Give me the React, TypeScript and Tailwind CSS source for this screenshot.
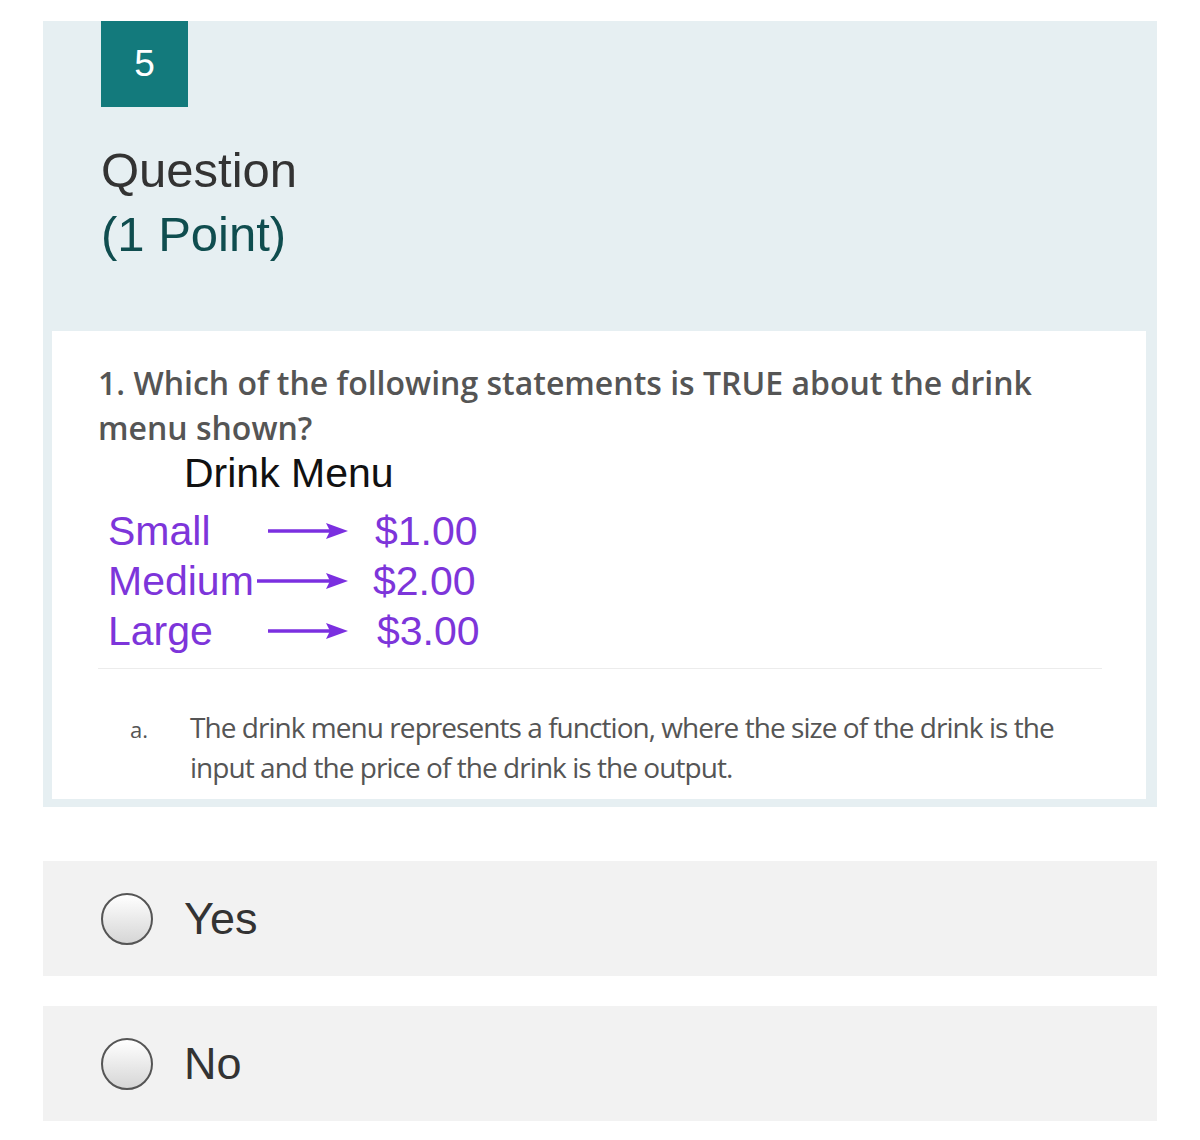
function Arrow({ long }: { long?: boolean }) {
  const w = long ? 91 : 80;
  return (
    <svg width={w} height="22" viewBox={`0 0 ${w} 22`} className="shrink-0">
      <line x1="0" y1="11" x2={w - 18} y2="11" stroke="#7b2fe0" strokeWidth="3.5" />
      <path d={`M${w - 22} 3 L${w} 11 L${w - 22} 19 L${w - 18} 11 Z`} fill="#7b2fe0" />
    </svg>
  );
}

const menu = [
  { size: 'Small', price: '$1.00', col: 'w-[160px]', pad: 'ml-[27px]', long: false },
  { size: 'Medium', price: '$2.00', col: 'w-[149px]', pad: 'ml-[25px]', long: true },
  { size: 'Large', price: '$3.00', col: 'w-[160px]', pad: 'ml-[29px]', long: false },
];

function Option({ label }: { label: string }) {
  return (
    <div className="flex h-[115px] items-center bg-[#f2f2f2] pl-[58px]">
      <span className="h-[52px] w-[52px] rounded-full border-2 border-[#555] bg-gradient-to-b from-white to-[#d6d6d6]" />
      <span className="ml-[31px] text-[45px] text-[#333]">{label}</span>
    </div>
  );
}

export default function App() {
  return (
    <div className="min-h-[1140px] bg-white px-[43px] pt-[21px] font-['Liberation_Sans',Arial,sans-serif]">
      <div className="bg-[#e6eff2] pb-[8px] pr-[11px] pl-[9px]">
        <div className="pl-[49px]">
          <div className="flex h-[86px] w-[87px] items-center justify-center bg-[#137a7c] text-[37px] text-white">
            5
          </div>
          <div className="mt-[31px] text-[49px] leading-[64px] text-[#333]">Question</div>
          <div className="text-[49px] leading-[64px] text-[#0f4d4f]">(1 Point)</div>
        </div>
        <div className="mt-[65px] bg-white pt-[29px] pr-[44px] pl-[46px] pb-[12px]">
          <p className="max-w-[970px] font-['Open_Sans',sans-serif] text-[32px] leading-[45px] font-semibold text-[#555]">
            1. Which of the following statements is TRUE about the drink menu shown?
          </p>
          <div className="pl-[86px] text-[41px] leading-[46px] text-[#111]">Drink Menu</div>
          <div className="mt-[10px] flex flex-col pl-[10px] text-[41px] leading-[50px] text-[#7d35da]">
            {menu.map((m) => (
              <div key={m.size} className="flex h-[50px] items-center">
                <span className={`${m.col} shrink-0`}>{m.size}</span>
                <Arrow long={m.long} />
                <span className={m.pad}>{m.price}</span>
              </div>
            ))}
          </div>
          <div className="mt-[12px] border-t border-[#ececec]" />
          <div className="mt-[38px] flex font-['Open_Sans',sans-serif] text-[#555]">
            <span className="w-[92px] shrink-0 pl-[32px] pt-[6px] text-[22px]">a.</span>
            <p className="max-w-[880px] text-[28px] leading-[40px] tracking-[-0.034em]">
              The drink menu represents a function, where the size of the drink is the input and the price of the drink is the output.
            </p>
          </div>
        </div>
      </div>
      <div className="mt-[54px] flex flex-col gap-[30px]">
        <Option label="Yes" />
        <Option label="No" />
      </div>
    </div>
  );
}
